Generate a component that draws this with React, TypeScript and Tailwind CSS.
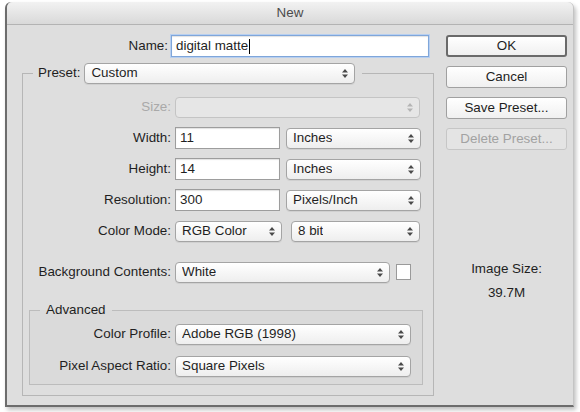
import React from "react";

const FONT = { fontFamily: '"Liberation Sans", Arial, Helvetica, sans-serif' };

function Arrows({ dim }: { dim?: boolean }) {
  return (
    <svg width="6" height="9" viewBox="0 0 6 9" className="shrink-0">
      <path d="M3 0 L6 3.4 L0 3.4 Z M0 5.6 L6 5.6 L3 9 Z" fill={dim ? "#b4b4b4" : "#4a4a4a"} />
    </svg>
  );
}

function Select({ value, className = "", disabled }: { value?: string; className?: string; disabled?: boolean }) {
  return (
    <div
      className={`flex h-[21px] shrink-0 items-center justify-between rounded-[4px] border pl-[6px] pr-[6px] ${
        disabled
          ? "border-[#c4c4c4] bg-[#e6e6e6]"
          : "border-[#a4a4a4] bg-linear-to-b from-white to-[#eeeeee] shadow-[0_1px_0_rgba(0,0,0,0.06)]"
      } ${className}`}
    >
      <span className="truncate">{value}</span>
      <Arrows dim={disabled} />
    </div>
  );
}

function Field({ value, className = "", focused }: { value: string; className?: string; focused?: boolean }) {
  return (
    <div
      className={`flex h-[22px] shrink-0 items-center bg-white px-[4px] shadow-[inset_0_1px_1px_rgba(0,0,0,0.12)] ${
        focused ? "border border-[#7fa6da] outline outline-[#b7cff0]" : "border border-[#9d9d9d]"
      } ${className}`}
    >
      <span>{value}</span>
      {focused && <span className="ml-px h-[15px] w-px bg-black" />}
    </div>
  );
}

function Button({ label, primary, disabled }: { label: string; primary?: boolean; disabled?: boolean }) {
  return (
    <div
      className={`flex h-[22px] w-[121px] items-center justify-center rounded-[3px] ${
        primary
          ? "border-2 border-[#6a6a6a] bg-linear-to-b from-white to-[#f0f0f0] text-[#1e1e1e]"
          : disabled
            ? "border border-[#c6c6c6] bg-[#e4e4e4] text-[#a2a2a2]"
            : "border border-[#a0a0a0] bg-linear-to-b from-white to-[#f0f0f0] text-[#1e1e1e]"
      }`}
    >
      {label}
    </div>
  );
}

function Row({ label, labelW, dim, children }: { label: string; labelW: string; dim?: boolean; children: React.ReactNode }) {
  return (
    <div className="flex h-[22px] items-center">
      <div className={`${labelW} shrink-0 pr-[4px] text-right ${dim ? "text-[#a9a9a9]" : ""}`}>{label}</div>
      {children}
    </div>
  );
}

export default function App() {
  return (
    <div className="h-[412px] w-[580px] overflow-hidden bg-white pl-[5px] pt-[2px] text-[13.4px] text-[#1f1f1f]" style={FONT}>
      <div className="flex h-[405px] w-[569px] flex-col rounded-t-[6px] border-b-2 border-l-2 border-r border-b-[#6c6c6c] border-l-[#6c6c6c] border-r-[#c4c4c4] bg-[#dedede] shadow-[2px_3px_4px_rgba(0,0,0,0.25)]">
        <div className="flex h-[23px] shrink-0 items-center justify-center rounded-t-[6px] border-b border-[#b3b3b3] bg-linear-to-b from-[#f2f2f2] to-[#d9d9d9] pt-px text-[#4b4b4b]">
          New
        </div>

        <div className="flex">
          {/* left column */}
          <div className="w-[426px] shrink-0 pl-[15px]">
            <div className="mt-[10px] flex h-[22px] items-center">
              <div className="w-[149px] shrink-0 pr-[3px] text-right">Name:</div>
              <Field value="digital matte" focused className="w-[258px]" />
            </div>

            <fieldset className="mt-[6px] w-[412px] border border-[#b6b6b6] pb-[10px]">
              <legend className="ml-[10px] flex items-center px-[5px]">
                <span className="pr-[4px]">Preset:</span>
                <Select value="Custom" className="w-[271px]" />
                <span className="w-[2px]" />
              </legend>

              <div className="mt-[12px] flex flex-col gap-[9px]">
                <Row label="Size:" labelW="w-[152px]" dim>
                  <Select disabled className="w-[245px]" />
                </Row>
                <Row label="Width:" labelW="w-[152px]">
                  <Field value="11" className="w-[105px]" />
                  <Select value="Inches" className="ml-[6px] w-[135px]" />
                </Row>
                <Row label="Height:" labelW="w-[152px]">
                  <Field value="14" className="w-[105px]" />
                  <Select value="Inches" className="ml-[6px] w-[135px]" />
                </Row>
                <Row label="Resolution:" labelW="w-[152px]">
                  <Field value="300" className="w-[105px]" />
                  <Select value="Pixels/Inch" className="ml-[6px] w-[135px]" />
                </Row>
                <Row label="Color Mode:" labelW="w-[152px]">
                  <Select value="RGB Color" className="w-[107px]" />
                  <Select value="8 bit" className="ml-[9px] w-[129px]" />
                </Row>
              </div>

              <div className="mt-[19px]">
                <Row label="Background Contents:" labelW="w-[152px]">
                  <Select value="White" className="w-[215px]" />
                  <div className="ml-[6px] h-[16px] w-[15px] border border-[#9a9a9a] bg-white" />
                </Row>
              </div>

              <fieldset className="ml-[6px] mt-[19px] w-[394px] border border-[#bcbcbc] bg-[#dadada] pb-[7px]">
                <legend className="ml-[10px] px-[6px] leading-[16px]">Advanced</legend>
                <div className="mt-[5px] flex flex-col gap-[10px]">
                  <Row label="Color Profile:" labelW="w-[145px]">
                    <Select value="Adobe RGB (1998)" className="w-[236px]" />
                  </Row>
                  <Row label="Pixel Aspect Ratio:" labelW="w-[145px]">
                    <Select value="Square Pixels" className="w-[236px]" />
                  </Row>
                </div>
              </fieldset>
            </fieldset>
          </div>

          {/* right column */}
          <div className="ml-[13px] flex w-[121px] shrink-0 flex-col">
            <div className="mt-[10px] flex flex-col gap-[9px]">
              <Button label="OK" primary />
              <Button label="Cancel" />
              <Button label="Save Preset..." />
              <Button label="Delete Preset..." disabled />
            </div>
            <div className="mt-[111px] text-center leading-[16px]">Image Size:</div>
            <div className="mt-[8px] text-center leading-[16px]">39.7M</div>
          </div>
        </div>
      </div>
    </div>
  );
}
